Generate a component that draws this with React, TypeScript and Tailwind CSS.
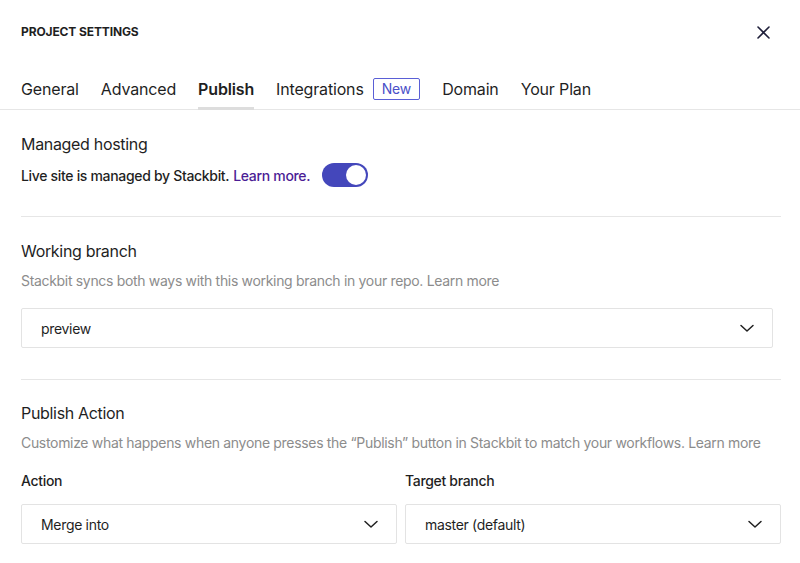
import React from "react";

const Chevron = () => (
  <svg width="16" height="16" viewBox="0 0 16 16" fill="none" className="shrink-0">
    <path d="M2 5.5L8 11l6-5.5" stroke="#1f1f1f" strokeWidth="1.5" strokeLinecap="round" strokeLinejoin="round" />
  </svg>
);

const Select = ({ value, className = "" }: { value: string; className?: string }) => (
  <div
    className={`flex h-[40px] items-center justify-between rounded-[2px] border border-[#e3e3e3] bg-white pl-[19px] pr-[17px] text-[14px] text-[#1f1f1f] ${className}`}
  >
    <span>{value}</span>
    <Chevron />
  </div>
);

export default function App() {
  const tabs = ["General", "Advanced", "Publish", "Integrations", "Domain", "Your Plan"];
  return (
    <div
      className="h-[563px] w-[800px] overflow-hidden bg-white tracking-[-0.02em] text-[#1f1f1f]"
      style={{ fontFamily: "Inter, 'Noto Sans', sans-serif" }}
    >
      <div className="flex items-center justify-between pl-[21px] pr-[30px] pt-[24px]">
        <div className="text-[12px] font-bold uppercase leading-[16px] tracking-[-0.01em]">Project Settings</div>
        <svg width="13" height="13" viewBox="0 0 13 13" fill="none">
          <path d="M1 1l11 11M12 1L1 12" stroke="#1f1f3a" strokeWidth="1.6" strokeLinecap="round" />
        </svg>
      </div>

      <div className="mt-[37px] flex gap-[22px] border-b border-[#e6e6e6] pl-[21px] tracking-[-0.01em]">
        {tabs.map((t) => (
          <div
            key={t}
            className={`-mb-px flex items-start border-b-[3px] pb-[6px] text-[16px] leading-[24px] ${
              t === "Publish" ? "border-[#dddddd] font-semibold" : "border-transparent"
            }`}
          >
            <span>{t}</span>
            {t === "Integrations" && (
              <span className="ml-[9px] mt-[1px] flex h-[22px] items-center rounded-[2px] border border-[#5a5fd6] px-[8px] text-[14px] leading-[20px] text-[#4a50c8]">
                New
              </span>
            )}
          </div>
        ))}
      </div>

      <div className="px-[21px] pr-[19px]">
        <div className="pt-[22px]">
          <div className="text-[16px] leading-[24px]">Managed hosting</div>
          <div className="mt-[7px] flex h-[24px] items-center text-[14px] font-medium">
            <span>Live site is managed by Stackbit.</span>
            <span className="ml-[4px] text-[#4c1d95]">Learn more.</span>
            <div className="ml-[12px] flex h-[24px] w-[46px] items-center justify-end rounded-full bg-[#4447bb] pr-[2px]">
              <div className="h-[20px] w-[20px] rounded-full bg-white" />
            </div>
          </div>
        </div>

        <div className="mt-[29px] border-t border-[#e6e6e6]" />

        <div className="pt-[22px]">
          <div className="text-[16px] leading-[24px]">Working branch</div>
          <div className="mt-[8px] text-[14px] leading-[20px] text-[#8c8c8c]">
            Stackbit syncs both ways with this working branch in your repo. Learn more
          </div>
          <Select value="preview" className="mt-[17px] mr-[8px]" />
        </div>

        <div className="mt-[31px] border-t border-[#e6e6e6]" />

        <div className="pt-[21px]">
          <div className="text-[16px] leading-[24px]">Publish Action</div>
          <div className="mt-[8px] whitespace-nowrap text-[14px] leading-[20px] text-[#8c8c8c]">
            Customize what happens when anyone presses the “Publish” button in Stackbit to match your workflows. Learn more
          </div>
          <div className="mt-[18px] grid grid-cols-2 gap-[8px]">
            <div>
              <div className="text-[14px] font-medium leading-[20px]">Action</div>
              <Select value="Merge into" className="mt-[13px]" />
            </div>
            <div>
              <div className="text-[14px] font-medium leading-[20px]">Target branch</div>
              <Select value="master (default)" className="mt-[13px]" />
            </div>
          </div>
        </div>
      </div>
    </div>
  );
}
